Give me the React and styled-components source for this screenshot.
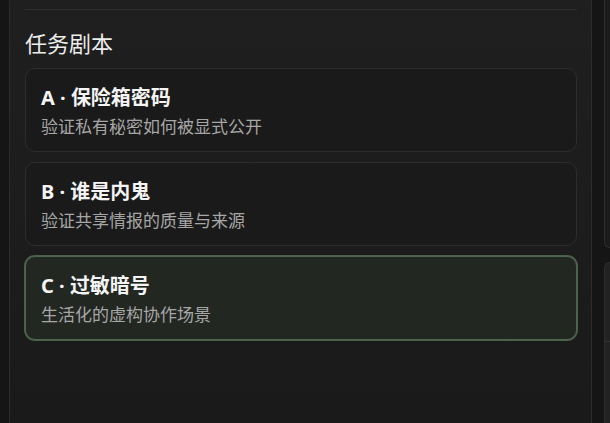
import React from 'react'
import styled, { createGlobalStyle } from 'styled-components'

const scripts = [
    { id: 'A', name: '保险箱密码', desc: '验证私有秘密如何被显式公开' },
    { id: 'B', name: '谁是内鬼', desc: '验证共享情报的质量与来源' },
    { id: 'C', name: '过敏暗号', desc: '生活化的虚构协作场景' },
]

export default function App() {
    const active = 'C'
    return (
        <>
            <Global />
            <Page>
                <Panel>
                    <Divider />
                    <Heading>任务剧本</Heading>
                    <List>
                        {scripts.map((s) => (
                            <Card key={s.id} $active={s.id === active}>
                                <CardTitle>{s.id} · {s.name}</CardTitle>
                                <CardDesc>{s.desc}</CardDesc>
                            </Card>
                        ))}
                    </List>
                </Panel>
                <Side>
                    <SideCard />
                    <SideCard $lower>
                        <SideHead />
                    </SideCard>
                </Side>
            </Page>
        </>
    )
}

const Global = createGlobalStyle`
    html, body {
        margin: 0;
        height: 100%;
        background: #151515;
        overflow: hidden;
    }
    body {
        font-family: "Noto Sans", "Noto Sans CJK SC", sans-serif;
        color: #ececec;
    }
`

const Page = styled.div`
    display: flex;
    gap: 12px;
    height: 423px;
    padding-left: 9px;
    box-sizing: border-box;
`

const Panel = styled.section`
    width: 583px;
    flex-shrink: 0;
    box-sizing: border-box;
    padding: 9px 14px 0 15px;
    border-left: 1px solid #2c2c2c;
    border-right: 1px solid #2c2c2c;
    background: linear-gradient(180deg, #1f1f1f 0%, #1c1c1c 60%, #1a1a1a 100%);
`

const Divider = styled.div`
    height: 1px;
    background: #2e2e2e;
`

const Heading = styled.h2`
    margin: 18px 0 10px;
    font-size: 22px;
    line-height: 30px;
    font-weight: 400;
    color: #ececec;
`

const List = styled.div`
    display: flex;
    flex-direction: column;
    gap: 10px;
`

const Card = styled.div`
    padding: 15px 15px 13px;
    border-radius: 10px;
    border: 1px solid ${(p) => (p.$active ? '#4d654d' : '#2d2d2d')};
    background: ${(p) => (p.$active ? '#222722' : '#1a1a1a')};
    box-shadow: ${(p) => (p.$active ? '0 0 0 1px #4a604a' : 'none')};
    display: flex;
    flex-direction: column;
    gap: 4px;
`

const CardTitle = styled.div`
    font-size: 20px;
    line-height: 27px;
    font-weight: 700;
    color: #f4f4f4;
`

const CardDesc = styled.div`
    font-size: 17px;
    line-height: 23px;
    color: #a6a6a6;
`

const Side = styled.div`
    flex: 1;
    display: flex;
    flex-direction: column;
    gap: 14px;
`

const SideCard = styled.div`
    box-sizing: border-box;
    height: ${(p) => (p.$lower ? 'auto' : '248px')};
    flex: ${(p) => (p.$lower ? 1 : 'none')};
    border: 1px solid #2e2e2e;
    border-right: none;
    border-top: ${(p) => (p.$lower ? '1px solid #2e2e2e' : 'none')};
    border-bottom: ${(p) => (p.$lower ? 'none' : '1px solid #2e2e2e')};
    border-radius: ${(p) => (p.$lower ? '10px 0 0 0' : '0 0 0 10px')};
    background: ${(p) => (p.$lower ? '#222222' : '#1b1b1b')};
`

const SideHead = styled.div`
    height: 78px;
    border-bottom: 1px solid #333;
`
